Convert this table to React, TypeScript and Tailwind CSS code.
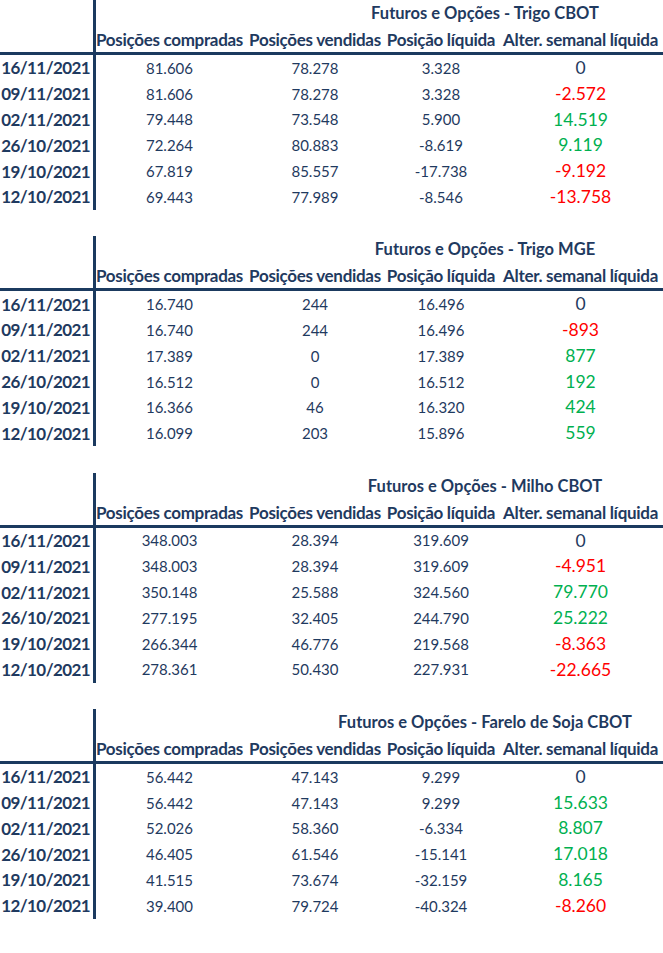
import React from 'react';

type Row = [string, string, string, string, string];

interface Section {
  title: string;
  rows: Row[];
}

const SECTIONS: Section[] = [
  {
    title: 'Futuros e Opções - Trigo CBOT',
    rows: [
      ['16/11/2021', '81.606', '78.278', '3.328', '0'],
      ['09/11/2021', '81.606', '78.278', '3.328', '-2.572'],
      ['02/11/2021', '79.448', '73.548', '5.900', '14.519'],
      ['26/10/2021', '72.264', '80.883', '-8.619', '9.119'],
      ['19/10/2021', '67.819', '85.557', '-17.738', '-9.192'],
      ['12/10/2021', '69.443', '77.989', '-8.546', '-13.758'],
    ],
  },
  {
    title: 'Futuros e Opções - Trigo MGE',
    rows: [
      ['16/11/2021', '16.740', '244', '16.496', '0'],
      ['09/11/2021', '16.740', '244', '16.496', '-893'],
      ['02/11/2021', '17.389', '0', '17.389', '877'],
      ['26/10/2021', '16.512', '0', '16.512', '192'],
      ['19/10/2021', '16.366', '46', '16.320', '424'],
      ['12/10/2021', '16.099', '203', '15.896', '559'],
    ],
  },
  {
    title: 'Futuros e Opções - Milho CBOT',
    rows: [
      ['16/11/2021', '348.003', '28.394', '319.609', '0'],
      ['09/11/2021', '348.003', '28.394', '319.609', '-4.951'],
      ['02/11/2021', '350.148', '25.588', '324.560', '79.770'],
      ['26/10/2021', '277.195', '32.405', '244.790', '25.222'],
      ['19/10/2021', '266.344', '46.776', '219.568', '-8.363'],
      ['12/10/2021', '278.361', '50.430', '227.931', '-22.665'],
    ],
  },
  {
    title: 'Futuros e Opções - Farelo de Soja CBOT',
    rows: [
      ['16/11/2021', '56.442', '47.143', '9.299', '0'],
      ['09/11/2021', '56.442', '47.143', '9.299', '15.633'],
      ['02/11/2021', '52.026', '58.360', '-6.334', '8.807'],
      ['26/10/2021', '46.405', '61.546', '-15.141', '17.018'],
      ['19/10/2021', '41.515', '73.674', '-32.159', '8.165'],
      ['12/10/2021', '39.400', '79.724', '-40.324', '-8.260'],
    ],
  },
];

const HEADERS = [
  'Posições compradas',
  'Posições vendidas',
  'Posição líquida',
  'Alter. semanal líquida',
];

// widths of the five columns, date column included
const GRID = 'grid grid-cols-[93px_153px_138px_114px_165px]';

function changeColor(value: string) {
  if (value === '0') return 'text-[#1f3a60]';
  return value.startsWith('-') ? 'text-[#ff0000]' : 'text-[#00b050]';
}

function CotTable({ title, rows }: Section) {
  return (
    <div className="relative h-[210px]">
      <div className="absolute left-[93px] top-0 h-full w-[3px] bg-[#1b3a5f]" />
      <div className="flex h-[27px] items-center justify-center pl-[307px] text-[16.5px] font-bold whitespace-nowrap">
        {title}
      </div>
      <div className={`${GRID} h-[25px] items-center text-[17px] font-bold whitespace-nowrap`}>
        <div />
        {HEADERS.map(h => (
          <div key={h} className="text-center tracking-[-0.3px]">
            {h}
          </div>
        ))}
      </div>
      <div className="h-[3px] bg-[#1b3a5f]" />
      {rows.map(([date, bought, sold, net, change]) => (
        <div key={date} className={`${GRID} h-[25.8px] items-center`}>
          <div className="pr-[3px] text-right text-[17px] font-bold tracking-[-0.6px]">{date}</div>
          <div className="text-center text-[15px]">{bought}</div>
          <div className="text-center text-[15px]">{sold}</div>
          <div className="text-center text-[15px]">{net}</div>
          <div className={`text-center text-[17.5px] ${changeColor(change)}`}>{change}</div>
        </div>
      ))}
    </div>
  );
}

export default function App() {
  return (
    <div className="h-[953px] w-[663px] overflow-hidden bg-white font-['Lato',sans-serif] text-[#1f3a60]">
      <div className="flex flex-col gap-[26.3px]">
        {SECTIONS.map(s => (
          <CotTable key={s.title} {...s} />
        ))}
      </div>
    </div>
  );
}
